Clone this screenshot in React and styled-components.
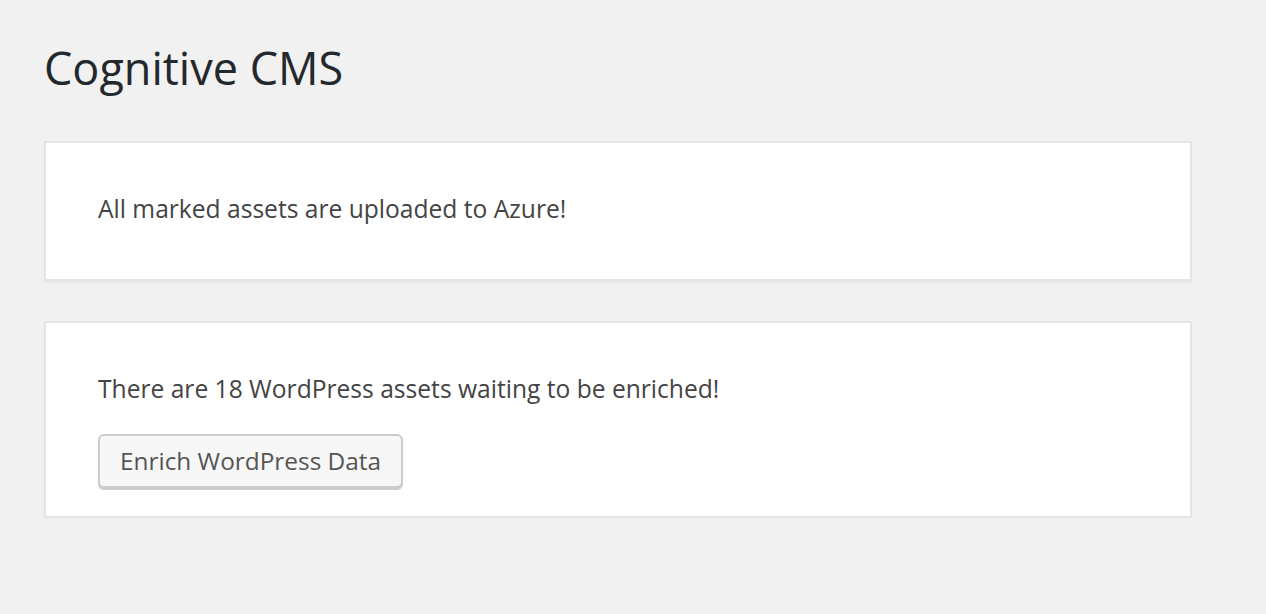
import React from "react";
import styled, { createGlobalStyle } from "styled-components";

const GlobalStyle = createGlobalStyle`
    html, body {
        margin: 0;
        padding: 0;
        background: #f1f1f1;
    }
    body {
        font-family: "Open Sans", "Noto Sans", sans-serif;
        color: #444;
    }
`;

const App = () => {
    return (
        <>
            <GlobalStyle />
            <Wrap>
                <Title>Cognitive CMS</Title>
                <Card>
                    <Message>All marked assets are uploaded to Azure!</Message>
                </Card>
                <Card compact>
                    <Message>There are 18 WordPress assets waiting to be enriched!</Message>
                    <Button type="button">Enrich WordPress Data</Button>
                </Card>
            </Wrap>
        </>
    );
};

//Styles
const Wrap = styled.div`
    padding: 20px 74px 0 44px;
    display: flex;
    flex-direction: column;
    gap: 40px;
`;

const Title = styled.h1`
    margin: 0 0 3px;
    padding: 18px 0 0;
    font-size: 45px;
    font-weight: 400;
    line-height: 60px;
    color: #23282d;
`;

const Card = styled.div`
    background: #fff;
    border: 2px solid #e5e5e5;
    box-shadow: 0 2px 2px rgba(0, 0, 0, 0.04);
    padding: 46px 52px ${(p) => (p.compact ? "26px" : "51px")};
    display: flex;
    flex-direction: column;
    align-items: flex-start;
    gap: 26px;
`;

const Message = styled.p`
    margin: 0;
    font-size: 24.6px;
    line-height: 39px;
    color: #444;
`;

const Button = styled.button`
    font-family: inherit;
    font-size: 24.4px;
    color: #555;
    background: #f7f7f7;
    border: 2px solid #ccc;
    border-radius: 6px;
    box-shadow: 0 2px 0 #ccc;
    height: 54px;
    padding: 0 20px 2px;
    margin-bottom: 2px;
    cursor: pointer;
`;

export default App;
